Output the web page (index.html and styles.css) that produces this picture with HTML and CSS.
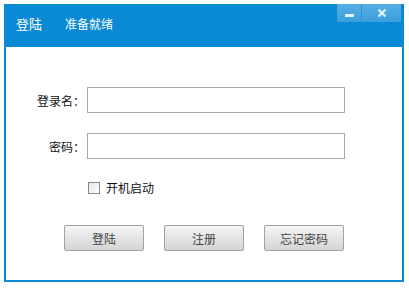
FILE: index.html
```html
<!DOCTYPE html>
<html>
<head>
<meta charset="utf-8">
<link rel="stylesheet" href="styles.css">
</head>
<body>
<div class="window">
  <div class="titlebar">
    <span class="title">登陆</span>
    <span class="status">准备就绪</span>
    <div class="controls">
      <div class="ctl min"><span class="dash"></span></div>
      <div class="ctl close">
        <svg width="10" height="10" viewBox="0 0 10 10"><path d="M1.5 1.5 L8.5 8.5 M8.5 1.5 L1.5 8.5" stroke="#e6f3fb" stroke-width="2.2" fill="none"/></svg>
      </div>
    </div>
  </div>
  <div class="content">
    <div class="row">
      <label class="lbl">登录名：</label>
      <div class="input"></div>
    </div>
    <div class="row">
      <label class="lbl">密码：</label>
      <div class="input"></div>
    </div>
    <div class="check">
      <span class="box"></span>
      <span class="ctext">开机启动</span>
    </div>
    <div class="buttons">
      <div class="btn">登陆</div>
      <div class="btn">注册</div>
      <div class="btn">忘记密码</div>
    </div>
  </div>
</div>
</body>
</html>
```
FILE: styles.css
```css
html, body {
  margin: 0;
  padding: 0;
  background: #ffffff;
}
body {
  width: 409px;
  height: 288px;
  font-family: "Noto Sans CJK SC", "Liberation Sans", sans-serif;
  font-size: 12px;
  color: #222;
}
.window {
  margin: 4px 0 0 4px;
  width: 400px;
  height: 278px;
  box-sizing: border-box;
  border: 2px solid #0a8ad5;
  border-top: 0;
  display: flex;
  flex-direction: column;
}
.titlebar {
  height: 43px;
  margin: 0 -2px;
  background: #0a8ad5;
  display: flex;
  align-items: flex-start;
  color: #fff;
}
.title {
  margin-left: 12px;
  margin-top: 12px;
  font-size: 13px;
  line-height: 16px;
}
.status {
  margin-left: 23px;
  margin-top: 12px;
  font-size: 12px;
  line-height: 16px;
}
.controls {
  margin-left: auto;
  margin-right: 3px;
  display: flex;
  height: 18px;
}
.ctl {
  height: 18px;
  background: linear-gradient(#56afe3, #3a9fdc);
  display: flex;
  align-items: center;
  justify-content: center;
}
.min {
  width: 24px;
  border-right: 1px solid #2f8fcb;
}
.dash {
  width: 9px;
  height: 3px;
  background: #e6f3fb;
  margin-top: 5px;
}
.close {
  width: 39px;
}
.content {
  flex: 1;
  padding-top: 40px;
  display: flex;
  flex-direction: column;
}
.row {
  display: flex;
  align-items: center;
  height: 26px;
  margin-bottom: 20px;
}
.lbl {
  width: 79px;
  text-align: right;
  font-size: 12px;
  color: #111;
}
.input {
  margin-left: 2px;
  width: 258px;
  height: 26px;
  box-sizing: border-box;
  border: 1px solid #a9a9a9;
  background: #fff;
}
.check {
  display: flex;
  align-items: center;
  margin-left: 82px;
  margin-top: 2px;
  height: 14px;
}
.box {
  width: 12px;
  height: 12px;
  border: 1px solid #8a8a8a;
  background: linear-gradient(135deg, #e6e6e6, #ffffff);
  box-sizing: border-box;
}
.ctext {
  margin-left: 6px;
  font-size: 12px;
  line-height: 14px;
  color: #111;
}
.buttons {
  display: flex;
  gap: 20px;
  margin-left: 58px;
  margin-top: 30px;
}
.btn {
  width: 80px;
  height: 26px;
  box-sizing: border-box;
  border: 1px solid #a3a3a3;
  border-radius: 2px;
  background: linear-gradient(#f5f5f5, #e4e4e4 50%, #d4d4d4);
  color: #444;
  font-size: 12px;
  display: flex;
  align-items: center;
  justify-content: center;
}
```
